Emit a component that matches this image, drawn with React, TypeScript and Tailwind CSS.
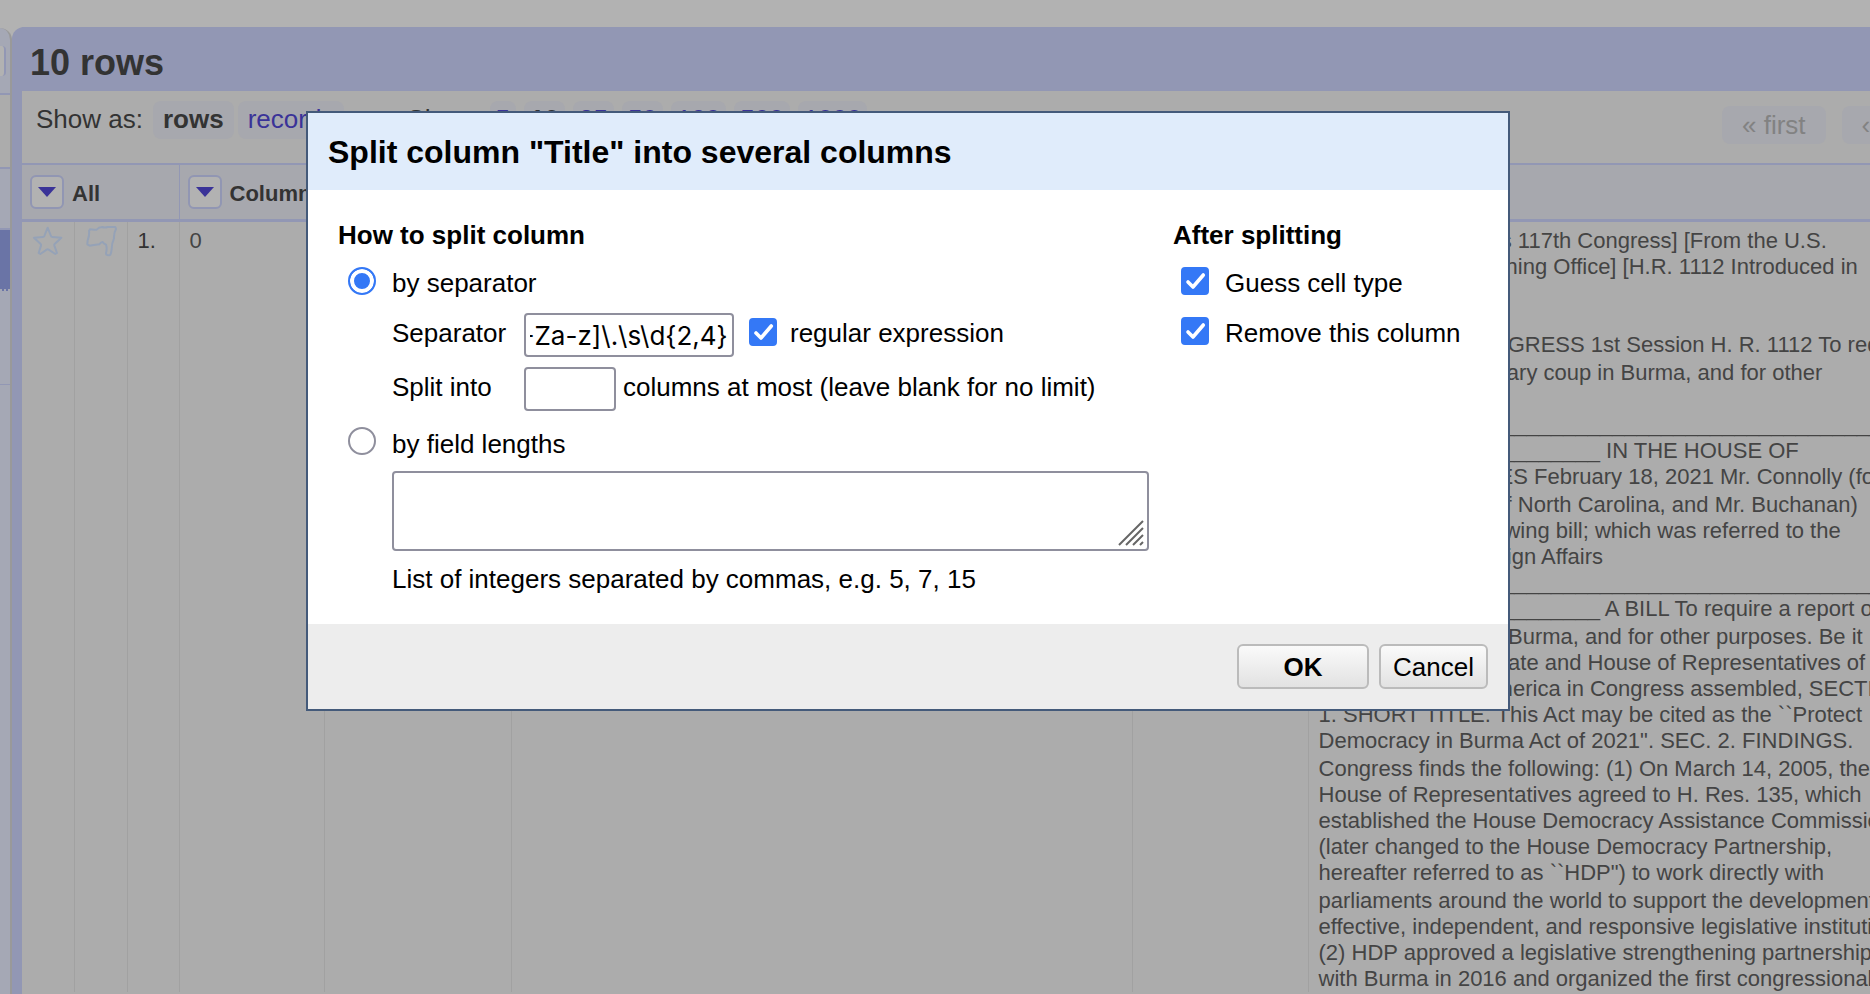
import { useEffect, useRef } from "react";

const pageSizes = ["5", "10", "25", "50", "100", "500", "1000"];

const rule = "_".repeat(60);

const cellText = [
  [
    "[Congressional Bills 117th Congress] [From the U.S.",
    "Government Publishing Office] [H.R. 1112 Introduced in",
    "House (IH)]",
    "",
    "<DOC> 117th CONGRESS 1st Session H. R. 1112 To require",
  ],
  [
    "a report on the military coup in Burma, and for other",
    "purposes.",
    rule,
    "_______________________ IN THE HOUSE OF",
    "REPRESENTATIVES February 18, 2021 Mr. Connolly (for",
  ],
  [
    "himself, Mr. Price of North Carolina, and Mr. Buchanan)",
    "introduced the following bill; which was referred to the",
    "Committee on Foreign Affairs",
    rule,
    "_______________________ A BILL To require a report on",
  ],
  [
    "the military coup in Burma, and for other purposes. Be it",
    "enacted by the Senate and House of Representatives of the",
    "United States of America in Congress assembled, SECTION",
    "1. SHORT TITLE. This Act may be cited as the ``Protect",
    "Democracy in Burma Act of 2021\". SEC. 2. FINDINGS.",
  ],
  [
    "Congress finds the following: (1) On March 14, 2005, the",
    "House of Representatives agreed to H. Res. 135, which",
    "established the House Democracy Assistance Commission",
    "(later changed to the House Democracy Partnership,",
    "hereafter referred to as ``HDP\") to work directly with",
  ],
  [
    "parliaments around the world to support the development of",
    "effective, independent, and responsive legislative institutions.",
    "(2) HDP approved a legislative strengthening partnership",
    "with Burma in 2016 and organized the first congressional",
  ],
];

function MenuButton({ label }: { label: string }) {
  return (
    <button
      aria-label={label}
      className="flex size-[34px] shrink-0 items-center justify-center rounded-md border-2 border-[#9196b3] bg-[#b2b2b2]"
    >
      <svg width="20" height="12" viewBox="0 0 20 12">
        <path d="M1 1h18l-9 10z" fill="#3a3398" />
      </svg>
    </button>
  );
}

function SidePanel() {
  return (
    <aside className="mt-[28px] w-[12px] shrink-0 overflow-hidden rounded-tr-xl border-r-2 border-[#999] bg-[#a5a8b5]">
      <div className="flex h-[67px] items-center border-b-2 border-[#9297b4]">
        <div className="h-[30px] w-[6px] rounded-r border-r-2 border-[#9297b4] bg-[#b2b2b2]" />
      </div>
      <div className="h-[74px] border-b-2 border-[#9297b4] bg-[#acacac]" />
      <div className="h-[61px] border-b-2 border-[#9297b4]" />
      <div className="h-[61px] border-b-2 border-dotted border-[#a5a8b5] bg-[#6a74a6]" />
      <div className="h-[94px] border-b border-[#9297b4]" />
    </aside>
  );
}

function DataTable() {
  return (
    <table className="w-full table-fixed border-collapse text-left text-[22px] leading-[26px]">
      <colgroup>
        <col className="w-[52px]" />
        <col className="w-[53px]" />
        <col className="w-[52px]" />
        <col className="w-[145px]" />
        <col className="w-[187px]" />
        <col className="w-[621px]" />
        <col className="w-[176px]" />
        <col />
      </colgroup>
      <thead>
        <tr className="h-[56px] border-t-2 border-b-3 border-[#9297b4] bg-[#a7a8ae] text-[#333]">
          <th colSpan={3} className="border-r border-[#9297b4] pl-2">
            <div className="flex items-center gap-2">
              <MenuButton label="All columns menu" />
              <span className="pt-1">All</span>
            </div>
          </th>
          <th className="overflow-hidden pl-2 whitespace-nowrap">
            <div className="flex items-center gap-2">
              <MenuButton label="Column menu" />
              <span className="pt-1">Column</span>
            </div>
          </th>
          <th colSpan={4} />
        </tr>
      </thead>
      <tbody>
        <tr className="align-top text-[#444]">
          <td className="border-r border-[#a1a1a1]">
            <svg className="mx-auto mt-[3px]" width="32" height="32" viewBox="0 0 96 96" fill="#acacac" stroke="#95a2b7" strokeWidth="6" strokeLinejoin="round">
              <path d="M47 8L57 33Q58 36 61 36L88 38L68 57Q66 59 67 62L75 84L70 87L50 74Q47 72 44 74L25 87L20 84L27 62Q28 59 26 57L6 38L33 36Q36 36 37 33z" />
            </svg>
          </td>
          <td className="border-r border-[#a1a1a1]">
            <svg className="mx-auto mt-[3px]" width="32" height="32" viewBox="0 0 96 96" fill="#acacac" stroke="#95a2b7" strokeWidth="6" strokeLinejoin="round">
              <path d="M15 13Q25 15 35 14Q42 6 52 6Q60 9 68 6L91 6L93 12Q86 24 87 40Q80 55 80 72Q79 84 76 89Q71 93 64 89L63 84Q67 70 63 59Q56 56 53 51Q46 52 43 58Q25 60 14 62L7 58L8 46Q14 30 12 18z" />
            </svg>
          </td>
          <td className="border-r border-[#a1a1a1] pt-[6px] pl-[10px] text-[#333]">1.</td>
          <td className="border-r border-[#a1a1a1] pt-[6px] pl-[10px]">0</td>
          <td className="border-r border-[#a1a1a1]" />
          <td className="border-r border-[#a1a1a1]" />
          <td className="border-r border-[#a1a1a1]" />
          <td className="overflow-hidden pt-[6px] pl-[10px]">
            <div className="flex flex-col gap-[2px] whitespace-pre">
              {cellText.map((lines, i) => (
                <p key={i}>{lines.join("\n")}</p>
              ))}
            </div>
          </td>
        </tr>
      </tbody>
    </table>
  );
}

function Checkbox({ id }: { id: string }) {
  return (
    <span className="relative size-7 shrink-0">
      <input
        id={id}
        type="checkbox"
        defaultChecked
        className="peer block size-7 appearance-none rounded border-2 border-[#8f8f9d] bg-white checked:border-[#3478f6] checked:bg-[#3478f6]"
      />
      <svg
        className="pointer-events-none absolute inset-0 hidden peer-checked:block"
        width="28"
        height="28"
        viewBox="0 0 28 28"
        fill="none"
        stroke="white"
        strokeWidth="3.6"
        strokeLinecap="round"
        strokeLinejoin="round"
      >
        <path d="M7 15L12 20L22.300 8" />
      </svg>
    </span>
  );
}

const radio =
  "size-7 shrink-0 appearance-none rounded-full border-2 border-[#8f8f9d] bg-white checked:border-[#3478f6] checked:bg-[#3478f6] checked:shadow-[inset_0_0_0_4px_white]";

const field = "h-11 rounded border-2 border-[#8f8f9d] bg-white px-1 font-[Inter,sans-serif]";

const action = "h-[45px] rounded-md border-2 border-[#bbb] bg-linear-to-b from-[#fafafa] to-[#e2e2e2]";

function SplitDialog() {
  const separatorRef = useRef<HTMLInputElement>(null);
  useEffect(() => {
    const el = separatorRef.current;
    if (el) el.scrollLeft = el.scrollWidth;
  }, []);

  return (
    <div
      role="dialog"
      aria-labelledby="dialog-title"
      className="absolute top-[111px] left-[306px] w-[1204px] border-2 border-[#445a7a] bg-white text-black"
    >
      <h2 id="dialog-title" className="bg-[#e0ecfb] px-5 pt-[21px] pb-[19px] text-[32px] leading-[37px] font-bold">
        Split column "Title" into several columns
      </h2>
      <div className="flex px-[30px] pt-[30px] pb-[30px]">
        <fieldset className="w-[835px]">
          <legend className="font-bold">How to split column</legend>
          <div className="flex items-center gap-4 pt-[14px] pl-[10px]">
            <input id="by-separator" type="radio" name="mode" defaultChecked className={radio} />
            <label htmlFor="by-separator" className="pt-1">by separator</label>
          </div>
          <div className="flex items-center pt-[15px] pl-[54px]">
            <label htmlFor="separator" className="w-[132px] pb-1">Separator</label>
            <input
              id="separator"
              ref={separatorRef}
              defaultValue="[A-Za-z]\.\s\d{2,4}"
              className={`w-[210px] ${field}`}
            />
            <div className="flex items-start gap-[13px] pb-1 pl-[15px]">
              <Checkbox id="regex" />
              <label htmlFor="regex">regular expression</label>
            </div>
          </div>
          <div className="flex items-center pt-[10px] pl-[54px]">
            <label htmlFor="limit" className="w-[132px] pb-1">Split into</label>
            <input id="limit" className={`w-[92px] ${field}`} />
            <span className="pb-1 pl-[7px]">columns at most (leave blank for no limit)</span>
          </div>
          <div className="flex items-center gap-4 pt-3 pl-[10px]">
            <input id="by-lengths" type="radio" name="mode" className={radio} />
            <label htmlFor="by-lengths" className="pt-[6px]">by field lengths</label>
          </div>
          <div className="pt-3 pl-[54px]">
            <div className="relative w-[757px]">
              <textarea
                aria-label="Field lengths"
                className="block h-20 w-full resize-none rounded border-2 border-[#8f8f9d]"
              />
              <svg className="absolute right-[5px] bottom-[5px]" width="26" height="26" viewBox="0 0 26 26" stroke="#666" strokeWidth="2">
                <path d="M1 25L25 1M8 25L25 8M15 25L25 15M22 25l3-3" />
              </svg>
            </div>
            <p className="pt-[13px]">List of integers separated by commas, e.g. 5, 7, 15</p>
          </div>
        </fieldset>
        <fieldset>
          <legend className="font-bold">After splitting</legend>
          <div className="flex items-center gap-4 pt-[14px] pl-2">
            <Checkbox id="guess" />
            <label htmlFor="guess" className="pt-1">Guess cell type</label>
          </div>
          <div className="flex items-center gap-4 pt-4 pl-2">
            <Checkbox id="remove" />
            <label htmlFor="remove" className="pt-1">Remove this column</label>
          </div>
        </fieldset>
      </div>
      <div className="flex justify-end gap-[10px] bg-[#ededed] px-5 py-5">
        <button className={`w-[132px] font-bold ${action}`}>OK</button>
        <button className={`w-[109px] ${action}`}>Cancel</button>
      </div>
    </div>
  );
}

export default function App() {
  return (
    <div className="relative flex h-screen overflow-hidden bg-[#b2b2b2] font-['Liberation_Sans',Arial,sans-serif] text-[26px] leading-[30px]">
      <SidePanel />
      <main className="mt-[27px] min-w-0 flex-1 rounded-tl-xl border-l-10 border-[#9297b4] bg-[#acacac]">
        <h1 className="h-16 bg-[#9297b4] pl-2 text-[36px] leading-[72px] font-bold text-[#333]">10 rows</h1>
        <div className="flex h-[72px] items-start whitespace-nowrap text-[#333]">
          <div className="flex pt-[10px] pl-[14px] leading-[36px]">
            <span className="pr-[10px]">Show as:</span>
            <span className="rounded-lg bg-[#a7a8ae] px-[10px] pb-[2px] font-bold">rows</span>
            <a href="#records" className="ml-1 rounded-lg bg-[#a7a8ae] px-[10px] pb-[2px] text-[#3a3398]">records</a>
            <span className="pr-[10px] pl-[63px]">Show:</span>
            <div className="flex gap-2">
              {pageSizes.map((n) =>
                n === "10" ? (
                  <span key={n} className="rounded-lg bg-[#a7a8ae] px-[6px] pb-[2px] font-bold">{n}</span>
                ) : (
                  <a key={n} href={`#${n}`} className="rounded-lg bg-[#a7a8ae] px-[6px] pb-[2px] text-[#3a3398]">{n}</a>
                ),
              )}
            </div>
          </div>
          <div className="ml-auto flex w-[148px] shrink-0 gap-4 overflow-hidden pt-[15px] leading-[38px] text-[#828282]">
            <span className="rounded-lg bg-[#a7a8ae] px-5">« first</span>
            <span className="rounded-lg bg-[#a7a8ae] px-5">‹ previous</span>
          </div>
        </div>
        <DataTable />
      </main>
      <SplitDialog />
    </div>
  );
}
